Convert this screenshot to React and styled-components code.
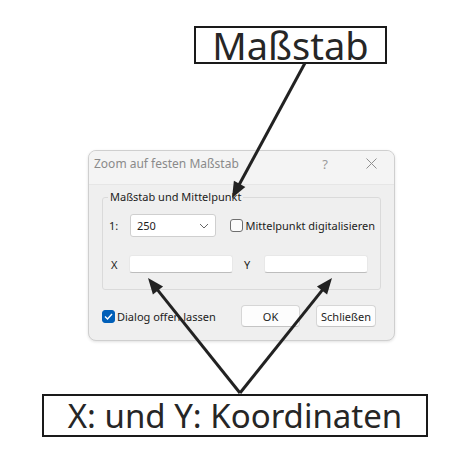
import React from "react";
import styled, { createGlobalStyle } from "styled-components";

const Global = createGlobalStyle`
  html, body {
    margin: 0;
    padding: 0;
    background: #ffffff;
  }
  * {
    box-sizing: border-box;
  }
`;

const uiFont = `"Segoe UI", "Noto Sans", "Open Sans", sans-serif`;

const Page = styled.div`
  position: relative;
  width: 462px;
  height: 466px;
  display: flex;
  flex-direction: column;
  align-items: flex-start;
  padding-top: 26px;
  overflow: hidden;
`;

const Callout = styled.div`
  margin-left: ${(p) => p.$left}px;
  margin-top: ${(p) => p.$top || 0}px;
  width: ${(p) => p.$width}px;
  height: ${(p) => p.$height}px;
  border: 2px solid #1a1a1a;
  background: #ffffff;
  display: flex;
  align-items: center;
  justify-content: center;
  font-family: ${uiFont};
  font-size: ${(p) => p.$size}px;
  color: #262626;
  line-height: 1;
  white-space: nowrap;
`;

const Dialog = styled.div`
  margin-left: 88px;
  margin-top: 86px;
  width: 307px;
  height: 191px;
  border: 1px solid #cfcfcf;
  border-radius: 8px;
  background: #efefef;
  box-shadow: 0 1px 3px rgba(0, 0, 0, 0.12);
  font-family: ${uiFont};
  font-size: 11px;
  color: #1c1c1c;
  overflow: hidden;
  display: flex;
  flex-direction: column;
`;

const TitleBar = styled.div`
  height: 34px;
  display: flex;
  align-items: center;
  padding: 0 0 8px 5px;
  background: #f4f4f4;
  border-bottom: 1px solid #e6e6e6;
`;

const Title = styled.span`
  flex: 1;
  font-size: 12px;
  color: #8a8a8a;
`;

const TitleButton = styled.span`
  width: 46px;
  display: flex;
  justify-content: center;
  font-size: 13px;
  color: #9a9a9a;
`;

const Body = styled.div`
  flex: 1;
  display: flex;
  flex-direction: column;
  padding: 5px 13px 13px 13px;
`;

const Group = styled.fieldset`
  margin: 0;
  padding: 10px 5px 16px 5px;
  border: 1px solid #dadada;
  border-radius: 3px;
  display: flex;
  flex-direction: column;
  gap: 18px;
  min-width: 0;
`;

const Legend = styled.legend`
  margin-left: 0;
  padding: 0 2px;
  font-size: 11px;
  line-height: 14px;
  color: #1c1c1c;
`;

const Row = styled.div`
  display: flex;
  align-items: center;
`;

const FieldLabel = styled.span`
  width: ${(p) => p.$width}px;
  padding-left: ${(p) => p.$indent || 0}px;
  font-size: 11px;
  flex-shrink: 0;
`;

const Combo = styled.div`
  width: 94px;
  height: 23px;
  background: #ffffff;
  border: 1px solid #cfcfcf;
  border-radius: 3px;
  display: flex;
  align-items: center;
  justify-content: space-between;
  padding: 0 6px 0 6px;
  font-size: 11px;
`;

const Check = styled.span`
  width: 13px;
  height: 13px;
  border-radius: 3px;
  flex-shrink: 0;
  display: inline-flex;
  align-items: center;
  justify-content: center;
  border: 1px solid ${(p) => (p.$checked ? "#005fb8" : "#6f6f6f")};
  background: ${(p) => (p.$checked ? "#005fb8" : "#fbfbfb")};
`;

const CheckLabel = styled.label`
  display: inline-flex;
  align-items: center;
  gap: 2px;
  margin-left: ${(p) => p.$left || 0}px;
  font-size: 11px;
  white-space: nowrap;
`;

const TextInput = styled.div`
  width: 104px;
  height: 18px;
  background: #ffffff;
  border: 1px solid #e8e8e8;
  border-bottom-color: #bdbdbd;
  border-radius: 3px;
`;

const Footer = styled.div`
  display: flex;
  align-items: center;
  margin-top: 15px;
  padding-right: 5px;
`;

const Spacer = styled.div`
  flex: 1;
`;

const Button = styled.div`
  width: ${(p) => p.$width}px;
  height: 22px;
  margin-left: ${(p) => p.$left || 0}px;
  background: #fdfdfd;
  border: 1px solid #d6d6d6;
  border-bottom-color: #c4c4c4;
  border-radius: 4px;
  display: flex;
  align-items: center;
  justify-content: center;
  font-size: 11px;
`;

const Overlay = styled.svg`
  position: absolute;
  left: 0;
  top: 0;
  pointer-events: none;
`;

const Arrow = ({ x1, y1, x2, y2 }) => {
  const ang = Math.atan2(y2 - y1, x2 - x1);
  const len = 16;
  const half = 6.5;
  const bx = x2 - Math.cos(ang) * len;
  const by = y2 - Math.sin(ang) * len;
  const px = -Math.sin(ang) * half;
  const py = Math.cos(ang) * half;
  const lx = x2 - Math.cos(ang) * (len - 3);
  const ly = y2 - Math.sin(ang) * (len - 3);
  return (
    <g>
      <line x1={x1} y1={y1} x2={lx} y2={ly} stroke="#222" strokeWidth="3" />
      <polygon
        points={`${x2},${y2} ${bx + px},${by + py} ${bx - px},${by - py}`}
        fill="#222"
      />
    </g>
  );
};

export default function App() {
  return (
    <>
      <Global />
      <Page>
        <Callout $left={194} $width={193} $height={38} $size={38}>
          Maßstab
        </Callout>

        <Dialog>
          <TitleBar>
            <Title>Zoom auf festen Maßstab</Title>
            <TitleButton>?</TitleButton>
            <TitleButton>
              <svg width="11" height="11" viewBox="0 0 11 11">
                <path d="M0.5 0.5 L10.5 10.5 M10.5 0.5 L0.5 10.5" stroke="#8f8f8f" strokeWidth="1" />
              </svg>
            </TitleButton>
          </TitleBar>
          <Body>
            <Group>
              <Legend>Maßstab und Mittelpunkt</Legend>
              <Row>
                <FieldLabel $width={22} $indent={1}>1:</FieldLabel>
                <Combo>
                  <span>250</span>
                  <svg width="10" height="6" viewBox="0 0 10 6">
                    <path d="M1 1 L5 5 L9 1" fill="none" stroke="#666" strokeWidth="1" />
                  </svg>
                </Combo>
                <CheckLabel $left={14}>
                  <Check />
                  Mittelpunkt digitalisieren
                </CheckLabel>
              </Row>
              <Row>
                <FieldLabel $width={21} $indent={3}>X</FieldLabel>
                <TextInput />
                <FieldLabel $width={31} $indent={11}>Y</FieldLabel>
                <TextInput />
              </Row>
            </Group>
            <Footer>
              <CheckLabel>
                <Check $checked>
                  <svg width="9" height="7" viewBox="0 0 9 7">
                    <path d="M1 3.5 L3.5 6 L8 1" fill="none" stroke="#fff" strokeWidth="1.4" />
                  </svg>
                </Check>
                Dialog offen lassen
              </CheckLabel>
              <Spacer />
              <Button $width={59}>OK</Button>
              <Button $width={60} $left={16}>Schließen</Button>
            </Footer>
          </Body>
        </Dialog>

        <Callout $left={42} $top={53} $width={386} $height={43} $size={33}>
          X: und Y: Koordinaten
        </Callout>

        <Overlay width="462" height="466" viewBox="0 0 462 466">
          <Arrow x1={305} y1={63} x2={232} y2={198} />
          <Arrow x1={240} y1={393} x2={148} y2={278} />
          <Arrow x1={240} y1={393} x2={332} y2={278} />
        </Overlay>
      </Page>
    </>
  );
}
